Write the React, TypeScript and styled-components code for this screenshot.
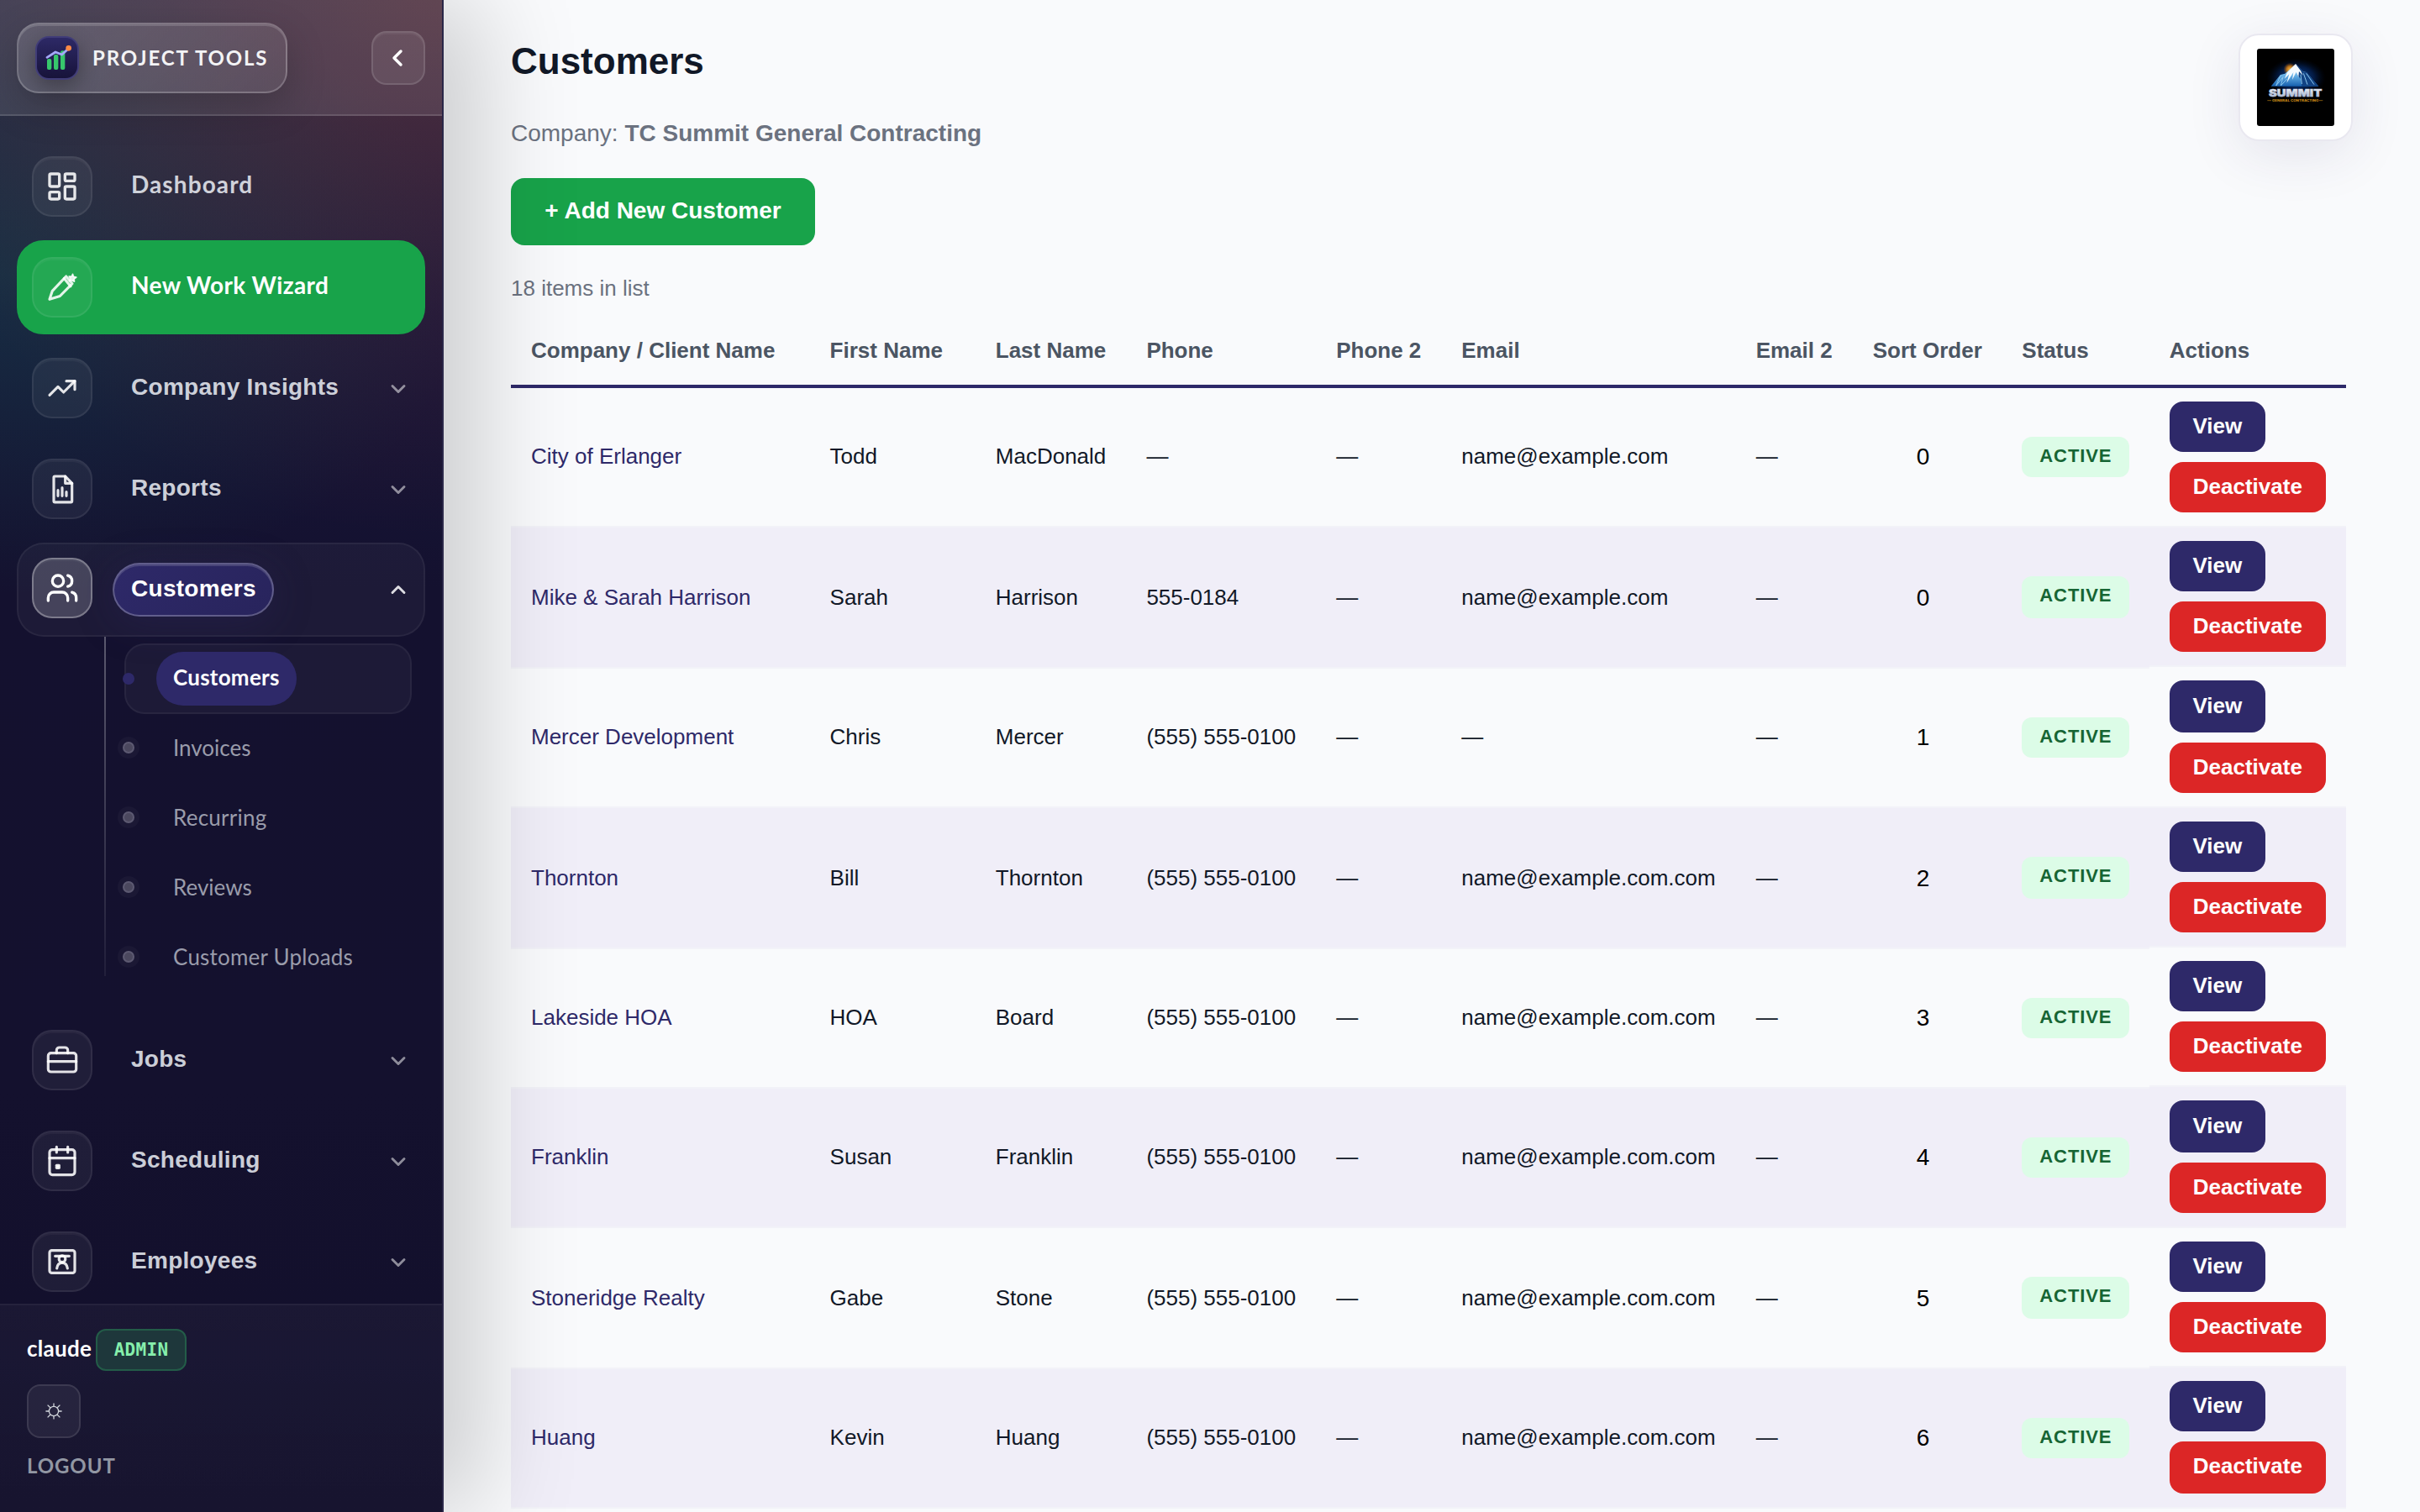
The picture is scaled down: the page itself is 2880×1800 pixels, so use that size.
import React from "react";
import styled, { createGlobalStyle, css } from "styled-components";
import { ChevronDown, ChevronLeft, ChevronUp, LayoutDashboard, Users } from "lucide-react";

const sans = `"Liberation Sans", Arial, sans-serif`;
const display = `Lato, "Open Sans", sans-serif`;

const GlobalStyle = createGlobalStyle`
  *, *::before, *::after { box-sizing: border-box; }
  body { margin: 0; background: #f9fafc; font-family: ${sans}; color: #111827; overflow: hidden; }
  button { font-family: inherit; border: 0; margin: 0; padding: 0; }
`;

const Shell = styled.div`
  display: flex;
  width: 2880px;
  height: 1800px;
  overflow: hidden;
`;

/* ---------- Sidebar ---------- */

const Sidebar = styled.aside`
  position: relative;
  z-index: 2;
  flex: none;
  display: flex;
  flex-direction: column;
  width: 528px;
  height: 1800px;
  border-right: 2px solid #2a2748;
  background:
    radial-gradient(ellipse 680px 640px at 100% 0, rgba(236, 76, 40, 0.19), rgba(236, 76, 40, 0)),
    radial-gradient(ellipse 560px 380px at 0 330px, rgba(22, 163, 110, 0.16), rgba(22, 163, 110, 0)),
    linear-gradient(180deg, #2b2a45 0, #17163a 380px, #14112f 700px, #14112e 1300px, #120f2b 1800px);
  box-shadow: 42px 0 112px rgba(0, 0, 0, 0.185);
`;

const SidebarHeader = styled.header`
  flex: none;
  display: flex;
  align-items: center;
  justify-content: space-between;
  height: 138px;
  padding: 2px 20px 0;
  border-bottom: 2px solid rgba(255, 255, 255, 0.13);
  background: rgba(255, 255, 255, 0.1);
`;

const Brand = styled.div`
  display: flex;
  align-items: center;
  gap: 16px;
  width: 322px;
  height: 84px;
  padding: 0 20px;
  border: 2px solid rgba(255, 255, 255, 0.2);
  border-radius: 26px;
  background: linear-gradient(135deg, rgba(255, 255, 255, 0.14), rgba(255, 255, 255, 0.07));
  box-shadow: inset 0 2px 0 rgba(255, 255, 255, 0.14), 0 16px 48px rgba(0, 0, 0, 0.2);
`;

const BrandMark = styled.span`
  display: block;
  flex: none;
  width: 52px;
  height: 52px;
  border: 2px solid #413d78;
  border-radius: 16px;
  background: linear-gradient(180deg, #2d2966, #17133a);
  box-shadow: 0 8px 24px rgba(0, 0, 0, 0.3);

  svg { display: block; }
`;

const BrandName = styled.span`
  font: 700 24px/36px ${display};
  letter-spacing: 1.85px;
  color: #f3f3f5;
  white-space: nowrap;
`;

const CollapseButton = styled.button`
  display: flex;
  align-items: center;
  justify-content: center;
  width: 64px;
  height: 64px;
  padding-right: 2px;
  border: 2px solid rgba(255, 255, 255, 0.12);
  border-radius: 18px;
  background: rgba(255, 255, 255, 0.08);
  box-shadow: inset 0 2px 0 rgba(255, 255, 255, 0.05);
  color: #fff;
`;

const Nav = styled.nav`
  flex: 1;
  min-height: 0;
  overflow: hidden;
  display: flex;
  flex-direction: column;
  gap: 8px;
  padding: 28px 20px 0;
`;

type Tone = "plain" | "primary" | "open";

const NavItem = styled.a<{ $tone: Tone }>`
  flex: none;
  display: flex;
  align-items: center;
  gap: 24px;
  height: 112px;
  padding: 0 16px;
  border: 2px solid transparent;
  border-radius: 32px;
  color: ${(p) => (p.$tone === "plain" ? "rgba(238, 241, 247, 0.86)" : "#fff")};
  ${(p) => p.$tone === "primary" && css`background: #18a34a; border-color: #18a34a;`}
  ${(p) =>
    p.$tone === "open" &&
    css`background: rgba(255, 255, 255, 0.04); border-color: rgba(255, 255, 255, 0.055);`}
`;

const NavIcon = styled.span<{ $active?: boolean }>`
  flex: none;
  display: flex;
  align-items: center;
  justify-content: center;
  width: 72px;
  height: 72px;
  margin-top: ${(p) => (p.$active ? "-4px" : "0")};
  border: 2px solid rgba(255, 255, 255, ${(p) => (p.$active ? 0.3 : 0.07)});
  border-radius: 24px;
  background: rgba(255, 255, 255, ${(p) => (p.$active ? 0.18 : 0.055)});
  box-shadow: inset 0 2px 0 rgba(255, 255, 255, 0.04);
  color: ${(p) => (p.$active ? "#fff" : "rgba(255, 255, 255, 0.88)")};

  svg { display: block; }
`;

const NavLabel = styled.span<{ $display?: boolean; $pill?: boolean; $track?: number }>`
  display: flex;
  align-items: center;
  height: 64px;
  padding: 0 22px ${(p) => (p.$display ? 6 : 3)}px;
  font: ${(p) => (p.$display ? `700 28px/40px ${display}` : `700 28px/40px ${sans}`)};
  letter-spacing: ${(p) => p.$track ?? 0.28}px;
  white-space: nowrap;
  ${(p) =>
    p.$pill &&
    css`
      width: 192px;
      padding: 0 20px 3px;
      border: 2px solid rgba(255, 255, 255, 0.25);
      border-radius: 32px;
      background: linear-gradient(135deg, #2e2969, #28245c);
      box-shadow: inset 0 2px 0 rgba(255, 255, 255, 0.14), 0 8px 48px rgba(45, 41, 102, 0.3);
    `}
`;

const Caret = styled.span<{ $open?: boolean }>`
  margin-left: auto;
  padding-top: ${(p) => (p.$open ? 0 : 2)}px;
  color: ${(p) => (p.$open ? "rgba(255,255,255,0.85)" : "rgba(255,255,255,0.52)")};

  svg { display: block; }
`;

const SubMenu = styled.div`
  flex: none;
  display: flex;
  height: 440px;
  margin-top: -8px;
  padding-left: 104px;
`;

const Rail = styled.span`
  flex: none;
  width: 2px;
  height: 404px;
  background: linear-gradient(180deg, rgba(255, 255, 255, 0.3), rgba(255, 255, 255, 0.06));
`;

const SubList = styled.div`
  flex: 1;
  padding: 8px 16px 0 22px;
`;

const SubItem = styled.a<{ $active?: boolean }>`
  display: flex;
  align-items: center;
  height: ${(p) => (p.$active ? 84 : 83)}px;
  border: 2px solid ${(p) => (p.$active ? "rgba(255,255,255,0.05)" : "transparent")};
  border-radius: 24px;
  background: ${(p) => (p.$active ? "rgba(255,255,255,0.04)" : "transparent")};
  color: ${(p) => (p.$active ? "#fff" : "#9a9cab")};
`;

const Dot = styled.span<{ $active?: boolean }>`
  flex: none;
  width: 14px;
  height: 14px;
  margin: 0 26px ${(p) => (p.$active ? 0 : 3)}px -4px;
  border: 2px solid ${(p) => (p.$active ? "#2e2969" : "#5d5a72")};
  border-radius: 50%;
  background: ${(p) => (p.$active ? "#2e2969" : "#4b485e")};
  box-shadow: ${(p) => (p.$active ? "none" : "0 0 0 6px rgba(255,255,255,0.03)")};
`;

const SubLabel = styled.span<{ $active?: boolean; $track: number }>`
  display: flex;
  align-items: center;
  height: 64px;
  padding: 0 20px ${(p) => (p.$active ? 4 : 3)}px;
  border-radius: 32px;
  background: ${(p) => (p.$active ? "#2e2969" : "transparent")};
  font: ${(p) => (p.$active ? 700 : 400)} 26px/36px ${display};
  letter-spacing: ${(p) => p.$track}px;
  white-space: nowrap;
`;

const SidebarFooter = styled.footer`
  flex: none;
  height: 248px;
  padding: 27px 32px 0;
  border-top: 2px solid rgba(255, 255, 255, 0.06);
  background: linear-gradient(180deg, rgba(255, 255, 255, 0.035), rgba(255, 255, 255, 0.02));
`;

const UserLine = styled.div`
  display: flex;
  align-items: center;
  gap: 5px;
  height: 50px;
`;

const UserName = styled.span`
  width: 77px;
  padding-bottom: 3px;
  font: 700 26px/36px ${display};
  letter-spacing: 0.3px;
  color: #fff;
`;

const RoleBadge = styled.span`
  display: flex;
  align-items: center;
  justify-content: center;
  width: 108px;
  height: 50px;
  margin-top: 1px;
  border: 2px solid #235c48;
  border-radius: 12px;
  background: #1e373b;
  font: 700 21px/30px "DejaVu Sans Mono", monospace;
  letter-spacing: 0.3px;
  color: #86efac;
`;

const ThemeButton = styled.button`
  display: flex;
  align-items: center;
  justify-content: center;
  width: 64px;
  height: 64px;
  margin-top: 17px;
  border: 2px solid rgba(255, 255, 255, 0.1);
  border-radius: 16px;
  background: rgba(255, 255, 255, 0.06);
  color: #d1d5db;
`;

const Logout = styled.a`
  display: block;
  margin-top: 15px;
  font: 700 24px/36px ${display};
  letter-spacing: 0.9px;
  color: #9297a3;
`;

/* ---------- Main ---------- */

const Main = styled.main`
  flex: 1;
  min-width: 0;
  padding: 40px 88px 0 80px;
  background: #f9fafc;
`;

const PageHeader = styled.div`
  display: flex;
  align-items: flex-start;
  justify-content: space-between;
`;

const Title = styled.h1`
  margin: 0;
  font: 700 44px/66px ${sans};
  color: #111827;
`;

const CompanyLine = styled.p`
  margin: 32px 0;
  font-size: 28px;
  line-height: 42px;
  color: #6b7280;
`;

const AddButton = styled.button`
  display: block;
  width: 362px;
  height: 80px;
  padding-bottom: 2px;
  border-radius: 16px;
  background: #18a34a;
  font: 700 28px/76px ${sans};
  color: #fff;
`;

const LogoCard = styled.div`
  display: flex;
  align-items: center;
  justify-content: center;
  width: 136px;
  height: 128px;
  margin-right: -8px;
  border: 2px solid #e9e8f0;
  border-radius: 24px;
  background: #fff;
  box-shadow: 0 16px 64px rgba(45, 41, 102, 0.1);

  svg { display: block; border-radius: 3px; }
`;

const Count = styled.p`
  margin: 31px 0 17px;
  font-size: 26px;
  line-height: 40px;
  color: #6b7280;
`;

const columns = "355.6px 197.2px 179.6px 225.8px 149.1px 350.4px 139.1px 177.6px 175.5px 234.1px";

const HeadRow = styled.div`
  display: grid;
  grid-template-columns: ${columns};
  height: 82px;
  border-bottom: 4px solid #2e2969;
`;

const HeadCell = styled.div`
  padding-left: 24px;
  font: 700 26px/74px ${sans};
  color: #4b5563;
  white-space: nowrap;
`;

const ActionButton = styled.button<{ $danger?: boolean }>`
  width: ${(p) => (p.$danger ? 186 : 114)}px;
  height: 60px;
  padding-bottom: 2px;
  border-radius: 16px;
  background: ${(p) => (p.$danger ? "#dc2626" : "#2e2969")};
  font: 700 26px/56px ${sans};
  color: #fff;
`;

const ActionCell = styled.div`
  display: flex;
  flex-direction: column;
  align-items: flex-start;
  gap: 12px;
  height: 166px;
  padding: 16px 24px 0;
  border-bottom: 2px solid #f2f2f8;
`;

const Cell = styled.div<{ $link?: boolean }>`
  height: var(--row);
  padding-left: 24px;
  border-bottom: 2px solid #f2f2f8;
  font-size: 26px;
  line-height: var(--line);
  color: ${(p) => (p.$link ? "#2e2969" : "#111827")};
  white-space: nowrap;
`;

const OrderCell = styled(Cell)`
  padding: 1px 10px 0 0;
  font-size: 28px;
  text-align: center;
  color: #000;
`;

const BadgeCell = styled(Cell)`
  padding-top: 58px;
`;

const StatusBadge = styled.span`
  display: block;
  width: 128px;
  height: calc(var(--row) - 118px);
  padding-left: 21px;
  border-radius: 12px;
  background: #dcfce7;
  font: 700 22px/45px ${sans};
  letter-spacing: 0.88px;
  color: #166534;
`;

const BodyRow = styled.div`
  --row: 166px;
  --line: 162px;
  display: grid;
  grid-template-columns: ${columns};
  align-items: start;
  height: var(--row);

  &:nth-child(2), &:nth-child(4), &:nth-child(7) {
    --row: 168px;
    --line: 166px;
  }
  &:nth-child(3) ${ActionCell}, &:nth-child(5) ${ActionCell},
  &:nth-child(6) ${ActionCell}, &:nth-child(8) ${ActionCell} {
    margin-top: -2px;
  }
  &:nth-child(3) ${ActionCell}, &:nth-child(6) ${ActionCell}, &:nth-child(8) ${ActionCell} {
    height: 168px;
  }
  &:nth-child(3) ${ActionButton}:first-child, &:nth-child(6) ${ActionButton}:first-child {
    height: 62px;
  }
  &:nth-child(8) ${ActionButton}:last-child {
    height: 62px;
    padding-bottom: 4px;
  }
  &:nth-child(even) > * {
    background: #f0eef8;
  }
`;

/* ---------- Drawings ---------- */

const Glyph = ({ children }: { children: React.ReactNode }) => (
  <svg width="40" height="40" viewBox="0 0 24 24" fill="none" stroke="currentColor" strokeWidth="1.9" strokeLinecap="round" strokeLinejoin="round">
    {children}
  </svg>
);

const PencilGlyph = () => (
  <Glyph>
    <path d="M3 20.6l2-6L14.8 4.2l4.4 5.2-8.8 8.9z" />
    <path d="M13.4 5.7l4.6 5.6" />
    <path d="M19.5 2.6l.6 1.8 2 .4-1.6 1.3.2 1.8-1.8-.9-1.8.5.7-1.8-.9-1.5 1.9.1z" fill="currentColor" strokeWidth="1" />
  </Glyph>
);

const TrendGlyph = () => (
  <Glyph>
    <path d="M3 17l6-6 4 4 8-8" />
    <path d="M15 7h6v6" />
  </Glyph>
);

const ReportGlyph = () => (
  <Glyph>
    <path d="M14.2 3H6.8a.8.8 0 0 0-.8.8v16.9a.8.8 0 0 0 .8.8h11.4a.8.8 0 0 0 .8-.8V8z" />
    <path d="M14.2 3v5H19" />
    <path d="M9 13v4M12 11.2V17M15 14.2V17" />
  </Glyph>
);

const BriefcaseGlyph = () => (
  <Glyph>
    <rect x="2" y="7" width="20" height="13.4" rx="2" />
    <path d="M8 7V5a2 2 0 0 1 2-2h4a2 2 0 0 1 2 2v2M2 13h20" />
  </Glyph>
);

const CalendarGlyph = () => (
  <Glyph>
    <rect x="3" y="4" width="18" height="18" rx="2" />
    <path d="M8 2v4M16 2v4M3 10h18" />
    <rect x="8" y="15.2" width="1.8" height="1.8" fill="currentColor" />
  </Glyph>
);

const EmployeeGlyph = () => (
  <Glyph>
    <rect x="3" y="4" width="18" height="16" rx="1.6" />
    <path d="M7 8h10" />
    <circle cx="12" cy="10" r="2.3" />
    <path d="M8.2 16.8c.3-2.4 1.6-4 3.8-4s3.5 1.6 3.8 4" />
  </Glyph>
);

const SunGlyph = () => (
  <svg width="20" height="20" viewBox="0 0 20 20" fill="none" stroke="currentColor" strokeWidth="1.3">
    <circle cx="10" cy="10" r="5.6" />
    <path d="M10 0.4v4M10 15.6v4M0.4 10h4M15.6 10h4M2.6 2.6l3.2 3.2M14.2 14.2l3.2 3.2M17.4 2.6l-3.2 3.2M5.8 14.2l-3.2 3.2" />
  </svg>
);

const BrandGlyph = () => (
  <svg width="48" height="48" viewBox="18 18 144 144">
    <g fill="#37c76c">
      <rect x="54" y="93" width="16" height="39" rx="6" />
      <rect x="78" y="78" width="16" height="54" rx="6" />
      <rect x="102" y="64" width="16" height="68" rx="6" />
    </g>
    <path d="M54 88L84 69l23 9 23-21" fill="none" stroke="#a5a8fb" strokeWidth="8.5" strokeLinecap="round" strokeLinejoin="round" />
    <circle cx="131" cy="55" r="10" fill="#ff8a45" />
  </svg>
);

const SummitLogo = () => (
  <svg width="92" height="92" viewBox="0 0 276 276">
    <defs>
      <radialGradient id="halo" cx="0.5" cy="0.5" r="0.5">
        <stop offset="0" stopColor="#0f5cc4" stopOpacity="0.95" />
        <stop offset="0.6" stopColor="#06307a" stopOpacity="0.55" />
        <stop offset="1" stopColor="#001030" stopOpacity="0" />
      </radialGradient>
      <radialGradient id="sun" cx="0.5" cy="0.5" r="0.5">
        <stop offset="0" stopColor="#ffc04a" />
        <stop offset="0.5" stopColor="#e08410" stopOpacity="0.8" />
        <stop offset="1" stopColor="#a04c00" stopOpacity="0" />
      </radialGradient>
      <linearGradient id="slope" x1="0" y1="0" x2="0" y2="1">
        <stop offset="0" stopColor="#e8f5ff" />
        <stop offset="0.5" stopColor="#6bb4e8" />
        <stop offset="1" stopColor="#1660ae" />
      </linearGradient>
      <linearGradient id="steel" x1="0" y1="0" x2="0" y2="1">
        <stop offset="0" stopColor="#ffffff" />
        <stop offset="1" stopColor="#8fa3c4" />
      </linearGradient>
    </defs>
    <rect width="276" height="276" fill="#000" />
    <ellipse cx="140" cy="104" rx="106" ry="70" fill="url(#halo)" />
    <circle cx="118" cy="74" r="24" fill="url(#sun)" />
    <path d="M50 134L84 93l16-4 38-34 26 27 12 2 44 50z" fill="url(#slope)" />
    <path d="M140 55l24 27 12 2 44 50h-60l-4-26-12-14z" fill="#124384" />
    <path d="M138 55l-30 30-10 22 17-16-9 31 24-38-4 27 14-28 8 18 2-20 14 14-8-16z" fill="#f6fbff" />
    <path d="M84 95l-16 37 25-31-8 31 22-24M166 88l14 40M176 88l28 40M156 92l4 34" fill="none" stroke="#8cc8ee" strokeWidth="3" />
    <text x="42" y="172" textLength="190" lengthAdjust="spacingAndGlyphs" fontFamily="Inter, 'Liberation Sans', sans-serif" fontWeight="900" fontSize="37" fill="url(#steel)" stroke="#c5d0e2" strokeWidth="1.5">SUMMIT</text>
    <path d="M37 185h14M221 185h14" stroke="#b97e14" strokeWidth="2" />
    <text x="54" y="189" textLength="166" lengthAdjust="spacingAndGlyphs" fontFamily="Inter, 'Liberation Sans', sans-serif" fontWeight="800" fontSize="11" fill="#c98a18">GENERAL CONTRACTING</text>
  </svg>
);

/* ---------- Data ---------- */

const subItems = [
  { label: "Customers", active: true, track: 0.25 },
  { label: "Invoices", track: 0 },
  { label: "Recurring", track: 0.25 },
  { label: "Reviews", track: 0 },
  { label: "Customer Uploads", track: 0.22 },
];

const headings = ["Company / Client Name", "First Name", "Last Name", "Phone", "Phone 2", "Email", "Email 2", "Sort Order", "Status", "Actions"];

const phone = "(555) 555-0100";
const mail = "name@example.com.com";
const rows = [
  ["City of Erlanger", "Todd", "MacDonald", "—", "name@example.com", 0],
  ["Mike & Sarah Harrison", "Sarah", "Harrison", "555-0184", "name@example.com", 0],
  ["Mercer Development", "Chris", "Mercer", phone, "—", 1],
  ["Thornton", "Bill", "Thornton", phone, mail, 2],
  ["Lakeside HOA", "HOA", "Board", phone, mail, 3],
  ["Franklin", "Susan", "Franklin", phone, mail, 4],
  ["Stoneridge Realty", "Gabe", "Stone", phone, mail, 5],
  ["Huang", "Kevin", "Huang", phone, mail, 6],
] as const;

type EntryProps = { icon: React.ReactNode; label: string; tone?: Tone; displayFont?: boolean; track?: number; caret?: boolean };

const Entry = ({ icon, label, tone = "plain", displayFont, track, caret }: EntryProps) => (
  <NavItem $tone={tone}>
    <NavIcon $active={tone === "open"}>{icon}</NavIcon>
    <NavLabel $display={displayFont} $pill={tone === "open"} $track={track}>{label}</NavLabel>
    {caret && (
      <Caret $open={tone === "open"}>
        {tone === "open" ? <ChevronUp size={28} strokeWidth={2.5} /> : <ChevronDown size={28} strokeWidth={2.5} />}
      </Caret>
    )}
  </NavItem>
);

export default function App() {
  return (
    <>
      <GlobalStyle />
      <Shell>
        <Sidebar>
          <SidebarHeader>
            <Brand>
              <BrandMark><BrandGlyph /></BrandMark>
              <BrandName>PROJECT TOOLS</BrandName>
            </Brand>
            <CollapseButton aria-label="Collapse"><ChevronLeft size={32} strokeWidth={2.6} /></CollapseButton>
          </SidebarHeader>
          <Nav>
            <Entry icon={<LayoutDashboard size={40} strokeWidth={2} />} label="Dashboard" displayFont track={1.1} />
            <Entry icon={<PencilGlyph />} label="New Work Wizard" tone="primary" displayFont track={0.37} />
            <Entry icon={<TrendGlyph />} label="Company Insights" caret />
            <Entry icon={<ReportGlyph />} label="Reports" caret />
            <Entry icon={<Users size={40} strokeWidth={2} />} label="Customers" tone="open" caret />
            <SubMenu>
              <Rail />
              <SubList>
                {subItems.map((s) => (
                  <SubItem key={s.label} $active={s.active}>
                    <Dot $active={s.active} />
                    <SubLabel $active={s.active} $track={s.track}>{s.label}</SubLabel>
                  </SubItem>
                ))}
              </SubList>
            </SubMenu>
            <Entry icon={<BriefcaseGlyph />} label="Jobs" caret />
            <Entry icon={<CalendarGlyph />} label="Scheduling" caret />
            <Entry icon={<EmployeeGlyph />} label="Employees" caret />
          </Nav>
          <SidebarFooter>
            <UserLine>
              <UserName>claude</UserName>
              <RoleBadge>ADMIN</RoleBadge>
            </UserLine>
            <ThemeButton aria-label="Theme"><SunGlyph /></ThemeButton>
            <Logout>LOGOUT</Logout>
          </SidebarFooter>
        </Sidebar>
        <Main>
          <PageHeader>
            <div>
              <Title>Customers</Title>
              <CompanyLine>Company: <strong>TC Summit General Contracting</strong></CompanyLine>
              <AddButton>+ Add New Customer</AddButton>
            </div>
            <LogoCard><SummitLogo /></LogoCard>
          </PageHeader>
          <Count>18 items in list</Count>
          <HeadRow>
            {headings.map((h) => <HeadCell key={h}>{h}</HeadCell>)}
          </HeadRow>
          <div>
            {rows.map(([company, first, last, tel, email, order]) => (
              <BodyRow key={company}>
                <Cell $link>{company}</Cell>
                <Cell>{first}</Cell>
                <Cell>{last}</Cell>
                <Cell>{tel}</Cell>
                <Cell>—</Cell>
                <Cell>{email}</Cell>
                <Cell>—</Cell>
                <OrderCell>{order}</OrderCell>
                <BadgeCell><StatusBadge>ACTIVE</StatusBadge></BadgeCell>
                <ActionCell>
                  <ActionButton>View</ActionButton>
                  <ActionButton $danger>Deactivate</ActionButton>
                </ActionCell>
              </BodyRow>
            ))}
          </div>
        </Main>
      </Shell>
    </>
  );
}
